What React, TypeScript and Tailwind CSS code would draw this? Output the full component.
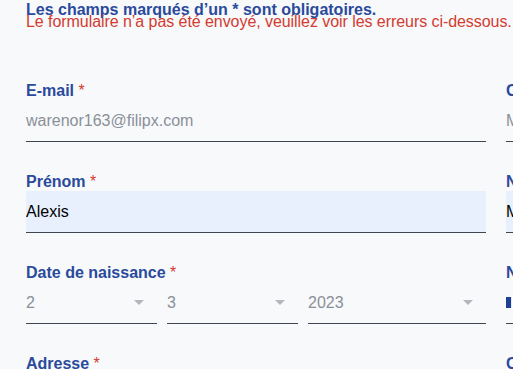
import React from 'react';

const font = { fontFamily: '"Liberation Sans", Arial, sans-serif' };

const Label = ({ text }: { text: string }) => (
  <div className="text-[16px] font-bold leading-[19px] text-[#2a4a9c] whitespace-nowrap">
    {text} <span className="font-normal text-[#d33b2f]">*</span>
  </div>
);

const Caret = () => (
  <svg width="10" height="5" viewBox="0 0 10 5" className="shrink-0">
    <path d="M0 0h10L5 5z" fill="#b3b6bb" />
  </svg>
);

const FrFlag = () => (
  <svg width="16" height="11" viewBox="0 0 3 2" preserveAspectRatio="none" className="shrink-0 mr-2">
    <rect width="1" height="2" x="0" fill="#1f3f95" />
    <rect width="1" height="2" x="1" fill="#ffffff" />
    <rect width="1" height="2" x="2" fill="#e1303a" />
  </svg>
);

interface InputProps {
  value: string;
  muted?: boolean;
  filled?: boolean;
  select?: boolean;
  flag?: boolean;
}

const Input = ({ value, muted, filled, select, flag }: InputProps) => (
  <div
    className={`h-[42px] flex items-center border-b border-[#3f4651] text-[16px] leading-[18px] whitespace-nowrap ${
      filled ? 'bg-[#e8f0fe] text-black' : muted ? 'text-[#8a9099]' : 'text-black'
    } ${select ? 'pr-[13px]' : ''}`}
  >
    {flag && <FrFlag />}
    <span className="flex-1">{value}</span>
    {select && <Caret />}
  </div>
);

const Field = ({ label, children }: { label: string; children: React.ReactNode }) => (
  <div className="flex flex-col">
    <Label text={label} />
    {children}
  </div>
);

export default function App() {
  return (
    <div className="w-screen h-screen overflow-hidden bg-[#f8f9fb]" style={font}>
      <div className="pl-[26px] pt-[1.5px]">
        <div className="h-[12px] text-[16px] font-bold leading-[16px] text-[#2a4a9c] whitespace-nowrap">
          Les champs marqués d’un * sont obligatoires.
        </div>
        <div className="text-[16px] leading-[16px] tracking-[-0.06px] text-[#d33b2f] whitespace-nowrap">
          Le formulaire n’a pas été envoyé, veuillez voir les erreurs ci-dessous.
        </div>

        <div className="mt-[51.5px] grid grid-cols-[460px_460px] gap-x-5 gap-y-[30px] w-max">
          <Field label="E-mail">
            <Input value="warenor163@filipx.com" muted />
          </Field>
          <Field label="Civilité">
            <Input value="Monsieur" muted select />
          </Field>

          <Field label="Prénom">
            <Input value="Alexis" filled />
          </Field>
          <Field label="Nom">
            <Input value="Martin" filled />
          </Field>

          <Field label="Date de naissance">
            <div className="grid grid-cols-[131px_131px_178px] gap-x-[10px]">
              <Input value="2" muted select />
              <Input value="3" muted select />
              <Input value="2023" muted select />
            </div>
          </Field>
          <Field label="Nationalité">
            <Input value="France" select flag />
          </Field>

          <Field label="Adresse">
            <Input value="" />
          </Field>
          <Field label="Code postal">
            <Input value="" />
          </Field>
        </div>
      </div>
    </div>
  );
}
